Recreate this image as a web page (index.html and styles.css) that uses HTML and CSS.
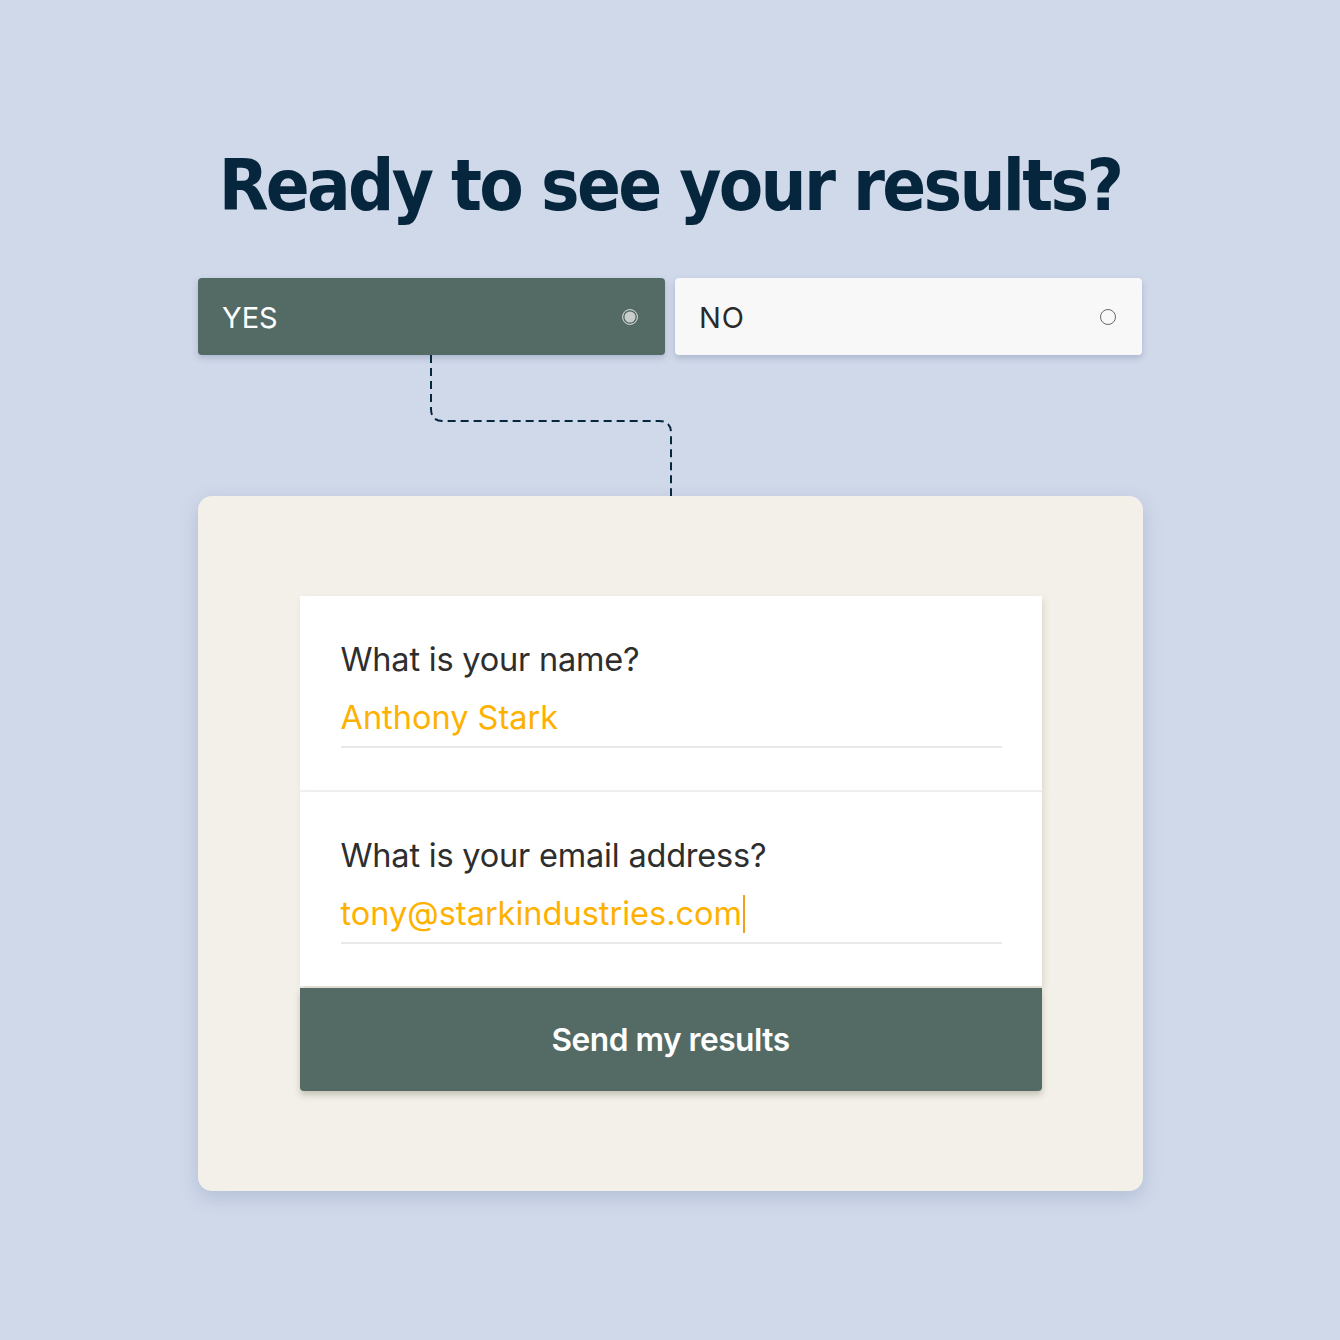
FILE: index.html
```html
<!DOCTYPE html>
<html>
<head>
<meta charset="utf-8">
<link rel="stylesheet" href="styles.css">
</head>
<body>
<main class="page">
  <h1 class="title">Ready to see your results?</h1>
  <div class="choices">
    <div class="choice choice-yes">
      <span class="choice-label">YES</span>
      <span class="radio radio-on"></span>
    </div>
    <div class="choice choice-no">
      <span class="choice-label">NO</span>
      <span class="radio"></span>
    </div>
  </div>
  <svg class="connector" width="260" height="141" viewBox="0 0 260 141">
    <path d="M 1 0 V 54 Q 1 66 13 66 H 229 Q 241 66 241 78 V 141" fill="none" stroke="#06263d" stroke-width="2" stroke-dasharray="8 5"/>
  </svg>
  <section class="card">
    <div class="form">
      <div class="field">
        <div class="field-label">What is your name?</div>
        <div class="field-value">Anthony Stark</div>
      </div>
      <div class="field field-second">
        <div class="field-label">What is your email address?</div>
        <div class="field-value"><span>tony@starkindustries.com</span><span class="caret"></span></div>
      </div>
      <div class="submit">Send my results</div>
    </div>
  </section>
</main>
</body>
</html>
```
FILE: styles.css
```css
html, body {
  margin: 0;
  padding: 0;
}
body {
  background: #d0d9ea;
  font-family: Inter, "Liberation Sans", sans-serif;
  width: 1340px;
  height: 1340px;
}
.page {
  display: flex;
  flex-direction: column;
  align-items: center;
  padding-top: 140px;
}
.title {
  margin: 0;
  font-family: "DejaVu Sans Condensed", "DejaVu Sans", sans-serif;
  font-stretch: condensed;
  font-weight: 900;
  font-size: 72px;
  line-height: 90px;
  letter-spacing: -2.7px;
  color: #06263d;
}
.choices {
  margin-top: 48px;
  display: flex;
  gap: 10px;
}
.choice {
  width: 467px;
  height: 77px;
  box-sizing: border-box;
  border-radius: 4px;
  display: flex;
  align-items: center;
  justify-content: space-between;
  padding: 2px 26px 0 24px;
  box-shadow: 0 3px 6px rgba(60, 80, 120, 0.25);
  font-size: 29px;
}
.choice-yes {
  background: #546a64;
  color: #ffffff;
}
.choice-no {
  background: #f8f8f8;
  color: #2a2a2a;
}
.choice-no .choice-label {
  letter-spacing: 1px;
}
.radio {
  width: 16px;
  height: 16px;
  border-radius: 50%;
  border: 1.5px solid #6a6a6a;
  box-sizing: border-box;
  margin-top: -2px;
}
.radio-on {
  border: 1.5px solid #c8cdca;
  background: #c9cecb;
  box-shadow: inset 0 0 0 1.5px #546a64;
  width: 16px;
  height: 16px;
  margin-right: 1px;
}
.connector {
  display: block;
  align-self: flex-start;
  margin-left: 430px;
}
.card {
  width: 945px;
  height: 695px;
  box-sizing: border-box;
  background: #f3f0e9;
  border-radius: 14px;
  box-shadow: 0 6px 18px rgba(90, 110, 150, 0.25);
  padding: 100px 101px 0 102px;
}
.form {
  display: flex;
  flex-direction: column;
  gap: 2px;
}
.field {
  background: #ffffff;
  height: 194px;
  box-sizing: border-box;
  padding: 42px 40px 0 41px;
  box-shadow: 2px 3px 6px rgba(120, 110, 90, 0.18);
}
.field-second {
  box-shadow: 2px 3px 6px rgba(120, 110, 90, 0.18), 0 -2px 0 #f1f1f1;
}
.field-label {
  font-size: 32.5px;
  line-height: 44px;
  color: #2e2e2e;
  letter-spacing: -0.2px;
}
.field-value {
  margin-top: 14px;
  font-size: 32.5px;
  line-height: 44px;
  color: #ffb100;
  padding-bottom: 6px;
  border-bottom: 2px solid #e9e9e9;
  display: flex;
  align-items: center;
}
.caret {
  display: inline-block;
  width: 1.5px;
  height: 38px;
  background: #f0a020;
  margin-left: 1px;
}
.submit {
  height: 103px;
  background: #546a64;
  border-radius: 0 0 4px 4px;
  color: #ffffff;
  font-size: 31.7px;
  font-weight: 600;
  letter-spacing: -0.5px;
  display: flex;
  align-items: center;
  justify-content: center;
  box-shadow: 0 4px 6px rgba(60, 60, 40, 0.25);
}
```
